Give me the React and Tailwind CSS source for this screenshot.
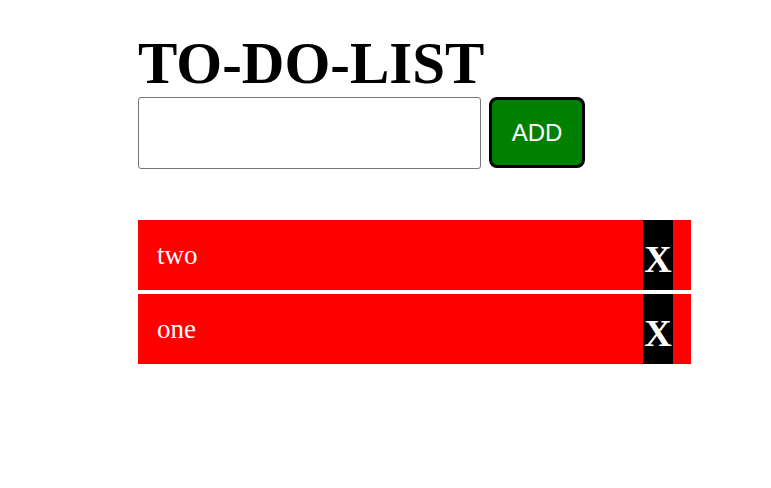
import { useState } from "react";

const App = () => {
    const [text, setText] = useState("");
    const [items, setItems] = useState(["two", "one"]);

    const addItem = () => {
        if (!text.trim()) return;
        setItems([text, ...items]);
        setText("");
    };

    return (
        <div className="w-[771px] h-[488px] bg-white pl-[138px] pt-[33px]">
            <h1 className="text-[59px] leading-[60px] font-bold text-black mb-[4px]" style={{ fontFamily: '"Liberation Serif", serif' }}>
                TO-DO-LIST
            </h1>
            <div className="flex items-start gap-[8px]">
                <input
                    value={text}
                    onChange={e => setText(e.target.value)}
                    className="w-[343px] h-[72px] border border-[#767676] rounded-[3px] px-2 outline-none"
                />
                <button
                    onClick={addItem}
                    className="w-[96px] h-[71px] bg-[#008000] border-[3px] border-black rounded-lg text-white text-[24px]"
                    style={{ fontFamily: '"Liberation Sans", Arial, sans-serif' }}
                >
                    ADD
                </button>
            </div>
            <ul className="mt-[51px] w-[553px] flex flex-col gap-[4px]" style={{ fontFamily: '"Liberation Serif", serif' }}>
                {items.map((item, i) => (
                    <li key={i} className="h-[70px] bg-[#ff0000] flex items-stretch justify-between pl-[19px] pr-[18px]">
                        <span className="self-center text-white text-[27px] pt-[1px]">{item}</span>
                        <button
                            onClick={() => setItems(items.filter((_, j) => j !== i))}
                            className="w-[30px] bg-black text-white font-bold text-[38px] leading-none flex items-center justify-center pt-[7px]"
                        >
                            X
                        </button>
                    </li>
                ))}
            </ul>
        </div>
    );
};

export default App;
